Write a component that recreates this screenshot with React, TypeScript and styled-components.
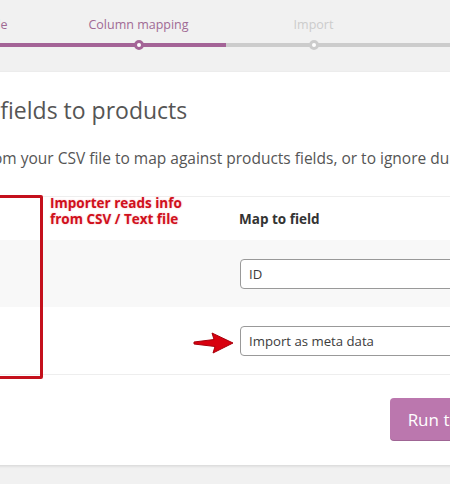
import React from 'react';
import styled, { createGlobalStyle } from 'styled-components';

var GlobalStyle = createGlobalStyle`
    html, body {
        margin: 0;
        padding: 0;
        background: #f1f1f1;
        font-family: 'Open Sans', 'Noto Sans', sans-serif;
        color: #555;
    }
`;

// Page frame (the screenshot only shows a crop of the importer)
var Viewport = styled.div`
    position: relative;
    width: 450px;
    height: 484px;
    overflow: hidden;
`;

// Progress steps
var Steps = styled.ol`
    display: flex;
    list-style: none;
    margin: 0 0 25px -124px;
    padding: 15px 0 0 0;
`;

var Step = styled.li<{ $done?: boolean }>`
    position: relative;
    flex: 0 0 175px;
    text-align: center;
    font-size: 12.5px;
    line-height: 20px;
    white-space: nowrap;
    padding-bottom: 8px;
    color: ${p => p.$done ? '#a06a94' : '#ccc'};
    border-bottom: 4px solid ${p => p.$done ? '#a46497' : '#ccc'};

    &::before {
        content: '';
        position: absolute;
        left: 50%;
        bottom: -7px;
        width: 4px;
        height: 4px;
        margin-left: -5px;
        border: 3px solid ${p => p.$done ? '#a46497' : '#ccc'};
        border-radius: 50%;
        background: #fff;
    }
`;

// Card
var Card = styled.div`
    margin-left: -122px;
    width: 708px;
    background: #fff;
    box-shadow: 0 1px 3px rgba(0, 0, 0, .13);
`;

var Header = styled.header`
    padding: 24px 24px 28px;
`;

var Heading = styled.h2`
    margin: 0 0 23px -2px;
    font-size: 23px;
    font-weight: 400;
    line-height: 29px;
    color: #555;
`;

var Description = styled.p`
    margin: 0 0 0 -10px;
    font-size: 15.5px;
    line-height: 20px;
    white-space: nowrap;
`;

var Table = styled.div`
    border-top: 1px solid #eee;
    border-bottom: 1px solid #eee;
`;

var Row = styled.div<{ $alt?: boolean; $head?: boolean }>`
    display: grid;
    grid-template-columns: 337px 1fr;
    align-items: center;
    padding: 0 24px;
    height: ${p => p.$head ? 43 : 67}px;
    background: ${p => p.$alt ? '#f8f8f8' : '#fff'};
`;

var HeadCell = styled.div`
    font-size: 13.5px;
    font-weight: 700;
    color: #333;
`;

var Cell = styled.div`
    font-size: 14px;
`;

var Select = styled.div`
    box-sizing: border-box;
    height: 30px;
    margin-left: 1px;
    padding: 0 8px;
    border: 1px solid #999;
    border-radius: 4px;
    font-size: 13.2px;
    line-height: 28px;
    color: #3c3c3c;
    background: #fff;
`;

var Footer = styled.div`
    display: flex;
    justify-content: flex-end;
    padding: 23px 24px 24px;
`;

var RunButton = styled.button`
    height: 43px;
    padding: 0 18px;
    border: none;
    border-radius: 4px;
    background: #bb77ae;
    box-shadow: inset 0 -1px 0 rgba(0, 0, 0, .15);
    color: #fff;
    font-family: inherit;
    font-size: 17px;
`;

// Red screenshot annotations
var RedBox = styled.div`
    position: absolute;
    left: -20px;
    top: 195px;
    width: 57px;
    height: 178px;
    border: 3px solid #c4101c;
    border-radius: 2px;
`;

var Note = styled.div`
    position: absolute;
    left: 50px;
    top: 195px;
    font-size: 13.5px;
    font-weight: 700;
    line-height: 16px;
    color: #d0101c;
    text-shadow: 0 0 2px #f6b8bd;
`;

var Arrow = styled.svg`
    position: absolute;
    left: 192px;
    top: 331px;
`;

export default function App()
{
    return (
        <Viewport>
            <GlobalStyle />
            <Steps>
                <Step $done>Upload CSV file</Step>
                <Step $done>Column mapping</Step>
                <Step>Import</Step>
                <Step>Done!</Step>
            </Steps>
            <Card>
                <Header>
                    <Heading>Map CSV fields to products</Heading>
                    <Description>Select fields from your CSV file to map against products fields, or to ignore during import.</Description>
                </Header>
                <Table>
                    <Row $head>
                        <HeadCell>Column name</HeadCell>
                        <HeadCell>Map to field</HeadCell>
                    </Row>
                    <Row $alt>
                        <Cell></Cell>
                        <Select>ID</Select>
                    </Row>
                    <Row>
                        <Cell></Cell>
                        <Select>Import as meta data</Select>
                    </Row>
                </Table>
                <Footer>
                    <RunButton>Run the importer</RunButton>
                </Footer>
            </Card>
            <RedBox />
            <Note>Importer reads info<br />from CSV / Text file</Note>
            <Arrow width="44" height="24" viewBox="0 0 44 24">
                <polygon points="2,11 22,8.5 20,2 41,12 21,22 23,15.5 2,13" fill="#d8000e" stroke="#a8000c" strokeWidth="1" strokeLinejoin="round" />
            </Arrow>
        </Viewport>
    );
}
